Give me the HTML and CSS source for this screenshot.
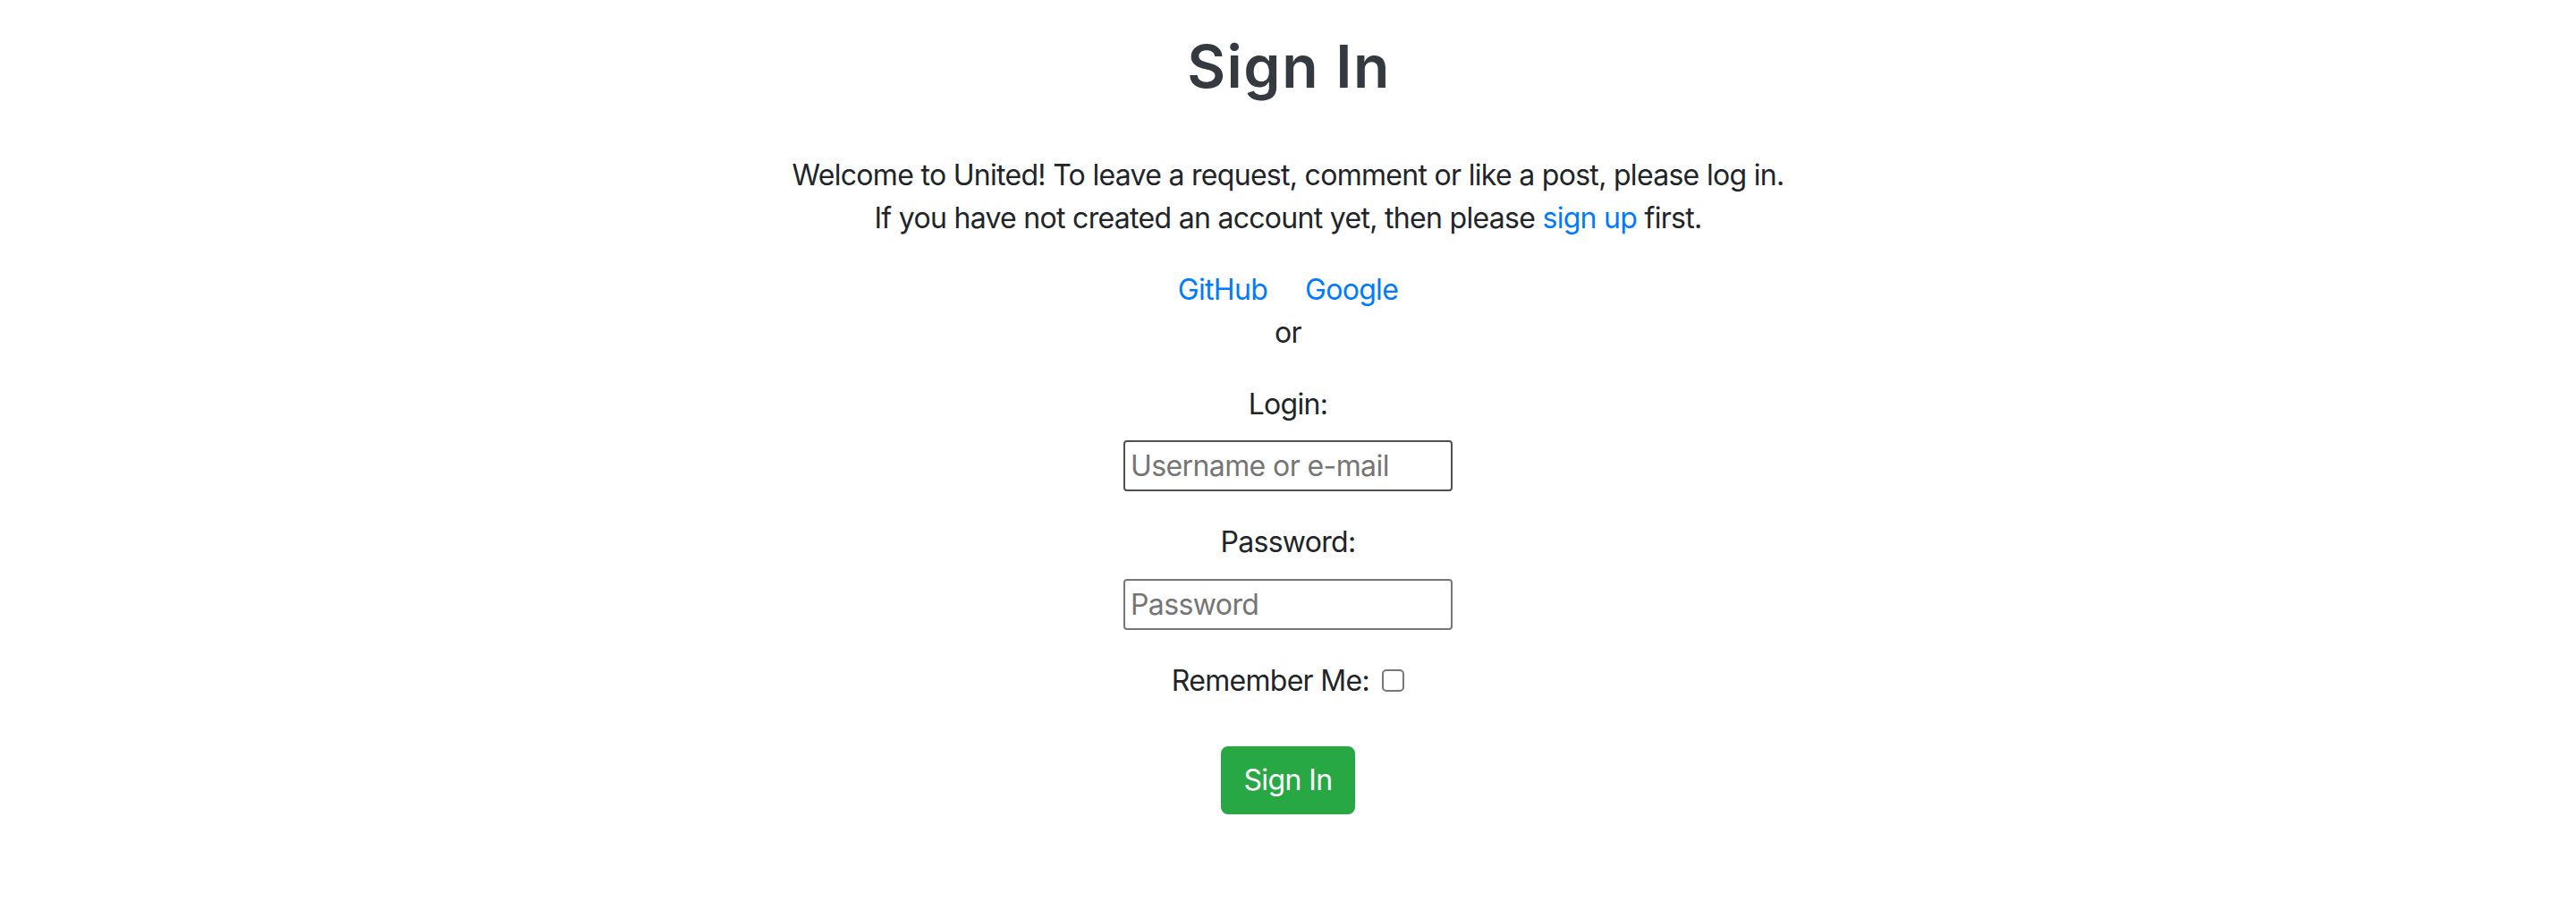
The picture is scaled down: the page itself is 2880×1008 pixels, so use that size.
FILE: index.html
```html
<!DOCTYPE html>
<html lang="en">
<head>
<meta charset="utf-8">
<title>Sign In</title>
<link rel="stylesheet" href="styles.css">
</head>
<body>
<main class="page">
  <h2 class="title">Sign In</h2>
  <p class="intro">Welcome to United! To leave a request, comment or like a post, please log in.<br>If you have not created an account yet, then please <a href="#" class="link">sign up</a> first.</p>
  <div class="socials">
    <div class="social-row">
      <a href="#" class="link">GitHub</a>
      <a href="#" class="link">Google</a>
    </div>
    <div class="or">or</div>
  </div>
  <form class="form">
    <label class="label" for="login">Login:</label>
    <input class="field field-dark" id="login" type="text" placeholder="Username or e-mail">
    <label class="label label-pw" for="password">Password:</label>
    <input class="field" id="password" type="password" placeholder="Password">
    <div class="remember">
      <label for="remember">Remember Me:</label>
      <input class="check" id="remember" type="checkbox">
    </div>
    <button class="btn" type="submit">Sign In</button>
  </form>
</main>
</body>
</html>
```

FILE: styles.css
```css
* { box-sizing: border-box; }
html, body { margin: 0; padding: 0; background: #ffffff; }
body {
  font-family: Inter, "Noto Sans", "DejaVu Sans", sans-serif;
  font-size: 32px;
  line-height: 48px;
  letter-spacing: -0.7px;
  color: #212529;
}
.page {
  display: flex;
  flex-direction: column;
  align-items: center;
  padding-top: 36px;
  text-align: center;
}
.title {
  margin: 0 0 59px;
  padding-left: 2px;
  font-size: 66px;
  line-height: 77px;
  font-weight: 600;
  letter-spacing: 1.5px;
  color: #343a40;
}
.intro { margin: 0 0 32px; }
.link { color: #007bff; text-decoration: none; }
.socials { display: flex; flex-direction: column; align-items: center; margin-bottom: 32px; }
.social-row { display: flex; gap: 42px; }
.form { display: flex; flex-direction: column; align-items: center; }
.label { display: block; margin-bottom: 16px; }
.label-pw { margin-top: 33px; margin-bottom: 17px; }
.field {
  width: 368px;
  height: 57px;
  padding: 2px 6px;
  font-family: inherit;
  font-size: 32px;
  line-height: 48px;
  letter-spacing: -0.6px;
  color: #212529;
  border: 2px solid #767676;
  border-radius: 4px;
  background: #fff;
  outline: none;
}
.field-dark { border-color: #505050; }
.field::placeholder { color: #757575; opacity: 1; }
.remember { margin-top: 33px; margin-bottom: 49px; }
.check {
  appearance: none;
  -webkit-appearance: none;
  width: 25px;
  height: 25px;
  margin: 0 0 0 6px;
  border: 2px solid #767676;
  border-radius: 5px;
  background: #fff;
  vertical-align: -1px;
}
.btn {
  width: 150px;
  height: 76px;
  padding: 0;
  font-family: inherit;
  font-size: 32px;
  line-height: 48px;
  letter-spacing: -0.6px;
  color: #fff;
  background: #28a745;
  border: 2px solid #28a745;
  border-radius: 8px;
}
```
